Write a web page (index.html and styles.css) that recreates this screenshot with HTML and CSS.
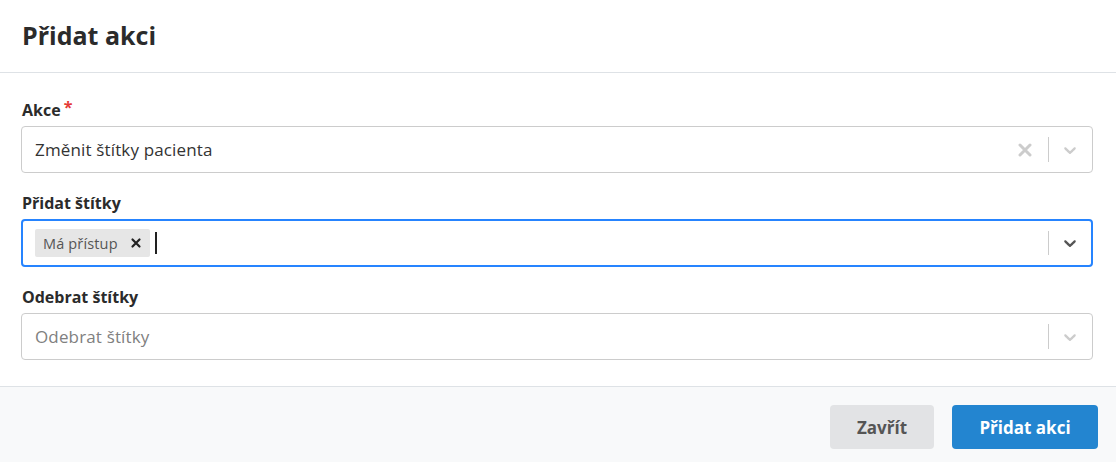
FILE: index.html
```html
<!DOCTYPE html>
<html lang="cs">
<head>
<meta charset="utf-8">
<title>Přidat akci</title>
<link rel="stylesheet" href="styles.css">
</head>
<body>
<div class="modal">
  <div class="modal-header">
    <h1 class="modal-title">Přidat akci</h1>
  </div>
  <div class="modal-body">
    <div class="field">
      <label class="field-label">Akce<span class="req">*</span></label>
      <div class="select">
        <div class="select-value">
          <span class="value-text">Změnit štítky pacienta</span>
        </div>
        <div class="indicators">
          <span class="ind clear">
            <svg width="14" height="14" viewBox="0 0 14 14"><path d="M2 2 L12 12 M12 2 L2 12" stroke="currentColor" stroke-width="3" stroke-linecap="round" fill="none"/></svg>
          </span>
          <span class="sep"></span>
          <span class="ind chevron">
            <svg width="20" height="20" viewBox="0 0 20 20"><path fill="currentColor" d="M4.516 7.548c0.436-0.446 1.043-0.481 1.576 0l3.908 3.747 3.908-3.747c0.533-0.481 1.141-0.446 1.574 0 0.436 0.445 0.408 1.197 0 1.615-0.406 0.418-4.695 4.502-4.695 4.502-0.217 0.223-0.502 0.335-0.787 0.335s-0.57-0.112-0.789-0.335c0 0-4.287-4.084-4.695-4.502s-0.436-1.17 0-1.615z"/></svg>
          </span>
        </div>
      </div>
    </div>
    <div class="field">
      <label class="field-label">Přidat štítky</label>
      <div class="select focused">
        <div class="select-value multi">
          <span class="chip"><span class="chip-label">Má přístup</span><span class="chip-remove">
            <svg width="12" height="12" viewBox="0 0 12 12"><path d="M2.5 2.5 L9.5 9.5 M9.5 2.5 L2.5 9.5" stroke="currentColor" stroke-width="2.2" stroke-linecap="round"/></svg>
          </span></span>
          <span class="caret"></span>
        </div>
        <div class="indicators">
          <span class="sep"></span>
          <span class="ind chevron dark">
            <svg width="20" height="20" viewBox="0 0 20 20"><path fill="currentColor" d="M4.516 7.548c0.436-0.446 1.043-0.481 1.576 0l3.908 3.747 3.908-3.747c0.533-0.481 1.141-0.446 1.574 0 0.436 0.445 0.408 1.197 0 1.615-0.406 0.418-4.695 4.502-4.695 4.502-0.217 0.223-0.502 0.335-0.787 0.335s-0.57-0.112-0.789-0.335c0 0-4.287-4.084-4.695-4.502s-0.436-1.17 0-1.615z"/></svg>
          </span>
        </div>
      </div>
    </div>
    <div class="field">
      <label class="field-label">Odebrat štítky</label>
      <div class="select">
        <div class="select-value">
          <span class="placeholder">Odebrat štítky</span>
        </div>
        <div class="indicators">
          <span class="sep"></span>
          <span class="ind chevron">
            <svg width="20" height="20" viewBox="0 0 20 20"><path fill="currentColor" d="M4.516 7.548c0.436-0.446 1.043-0.481 1.576 0l3.908 3.747 3.908-3.747c0.533-0.481 1.141-0.446 1.574 0 0.436 0.445 0.408 1.197 0 1.615-0.406 0.418-4.695 4.502-4.695 4.502-0.217 0.223-0.502 0.335-0.787 0.335s-0.57-0.112-0.789-0.335c0 0-4.287-4.084-4.695-4.502s-0.436-1.170 0-1.615z"/></svg>
          </span>
        </div>
      </div>
    </div>
  </div>
  <div class="modal-footer">
    <button class="btn btn-secondary">Zavřít</button>
    <button class="btn btn-primary">Přidat akci</button>
  </div>
</div>
</body>
</html>
```
FILE: styles.css
```css
* { box-sizing: border-box; }
html, body { margin: 0; padding: 0; }
body {
  font-family: "Open Sans", "Noto Sans", sans-serif;
  color: #333;
  background: #fff;
  width: 1116px;
  height: 462px;
  overflow: hidden;
}
.modal { display: flex; flex-direction: column; height: 462px; }
.modal-header {
  height: 73px;
  border-bottom: 1px solid #dee2e6;
  display: flex;
  align-items: center;
  padding: 0 22px;
}
.modal-title {
  margin: 0;
  font-size: 25px;
  font-weight: 700;
  color: #2b2b2b;
  line-height: 1;
  padding-bottom: 2px;
}
.modal-body {
  padding: 26px 23px 26px 21px;
  display: flex;
  flex-direction: column;
  gap: 19px;
  border-bottom: 1px solid #dee2e6;
}
.field { display: flex; flex-direction: column; }
.field-label {
  font-size: 16px;
  font-weight: 700;
  line-height: 22px;
  margin-bottom: 5px;
  padding-left: 1px;
  color: #2b2b2b;
}
.req { color: #e53935; margin-left: 3px; position: relative; top: -3px; }
.select {
  height: 47px;
  border: 1px solid #ccc;
  border-radius: 4px;
  display: flex;
  align-items: center;
  background: #fff;
}
.select.focused {
  height: 48px;
  border: 2px solid #2684ff;
}
.select-value {
  flex: 1;
  display: flex;
  align-items: center;
  padding: 0 13px;
  font-size: 17px;
  letter-spacing: 0.15px;
  color: #333;
}
.select.focused .select-value { padding-left: 12px; }
.placeholder { color: #808080; }
.indicators { display: flex; align-items: center; align-self: stretch; }
.ind { display: flex; color: #ccc; }
.ind.dark { color: #555; }
.ind.chevron { padding: 8px 12px 8px 11px; }
.ind.clear { padding: 0 16px 0 8px; }
.sep { width: 1px; background: #ccc; align-self: stretch; margin: 10px 0; }
.select.focused .ind.chevron { padding-right: 11px; }
.chip {
  display: inline-flex;
  align-items: center;
  background: #e6e6e6;
  border-radius: 2px;
  height: 28px;
  font-size: 14.5px;
  color: #555;
}
.chip-label { padding: 0 6px 0 8px; }
.chip-remove { display: flex; padding: 0 8px 0 6px; color: #222; }
.caret {
  width: 2px;
  height: 22px;
  background: #222;
  margin-left: 5px;
}
.modal-footer {
  flex: 1;
  background: #f8f9fa;
  display: flex;
  justify-content: flex-end;
  align-items: flex-start;
  gap: 18px;
  padding: 18px 18px 0 0;
}
.btn {
  height: 44px;
  border: none;
  border-radius: 4px;
  font-family: "Open Sans", "Noto Sans", sans-serif;
  font-size: 17px;
  font-weight: 700;
  padding: 0;
}
.btn-secondary { background: #e2e3e5; color: #555; width: 104px; }
.btn-primary { background: #2385d0; color: #fff; width: 146px; }
```
